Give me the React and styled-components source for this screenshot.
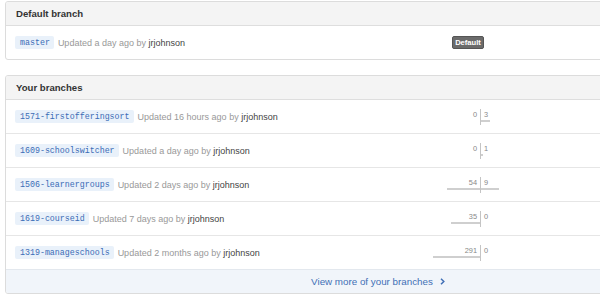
import React from 'react';
import styled, {createGlobalStyle} from "styled-components";

const GlobalStyle = createGlobalStyle`
    html, body {
        margin: 0;
        padding: 0;
        background: #fff;
        overflow: hidden;
    }
    body {
        font-family: "Liberation Sans", Arial, sans-serif;
        color: #333;
    }
`;

const Page = styled.div`
    width: 600px;
    height: 301px;
    padding: 1px 0 0 5px;
    box-sizing: border-box;
    display: flex;
    flex-direction: column;
    gap: 15px;
`;

const Box = styled.div`
    width: 744px;
    flex-shrink: 0;
    border: 1px solid #dcdcdc;
    border-radius: 3px;
    background: #fff;
    overflow: hidden;
`;

const BoxHeader = styled.div`
    height: 24px;
    box-sizing: border-box;
    padding: 0 0 1px 10px;
    background: #f4f4f4;
    border-bottom: 1px solid #dedede;
    display: flex;
    align-items: center;
    font-size: 9.6px;
    font-weight: 700;
    color: #333;
`;

const Row = styled.div`
    height: 33px;
    display: grid;
    grid-template-columns: 365px 200px 1fr;
    align-items: center;
    padding-left: 9px;
    border-top: ${props => props.first ? 'none' : '1px solid #e6e6e6'};
`;

const Summary = styled.div`
    display: flex;
    align-items: center;
    gap: 4px;
    white-space: nowrap;
`;

const BranchName = styled.span`
    display: inline-block;
    height: 13px;
    line-height: 13px;
    padding: 0 4px 0 5px;
    border-radius: 2px;
    background: #e9f1fa;
    color: #3a6cb6;
    font-family: "Liberation Mono", "DejaVu Sans Mono", monospace;
    font-size: 8.3px;
`;

const Updated = styled.span`
    font-size: 9px;
    color: #999;
`;

const Author = styled.span`
    color: #444;
`;

const DefaultCell = styled.div`
    display: flex;
    justify-content: center;
    padding-right: 24px;
`;

const DefaultLabel = styled.span`
    display: inline-block;
    height: 11px;
    line-height: 11px;
    padding: 0 2px;
    background: #6b6b6b;
    border: 1px solid #555;
    border-radius: 2px;
    color: #fff;
    font-size: 7.6px;
    font-weight: 700;
`;

const Compare = styled.div`
    display: grid;
    grid-template-columns: 1fr 1fr;
    height: 16px;
`;

const Half = styled.div`
    position: relative;
    height: 16px;
    display: flex;
    align-items: flex-start;
    justify-content: ${props => props.ahead ? 'flex-start' : 'flex-end'};
    border-left: ${props => props.ahead ? '1px solid #c4c4c4' : 'none'};
`;

const Count = styled.span`
    display: block;
    padding: 1px 3px 0;
    font-size: 7.4px;
    line-height: 9px;
    color: #888;
`;

const Bar = styled.div`
    position: absolute;
    bottom: 3px;
    height: 2px;
    width: ${props => props.size}px;
    background: #cfcfcf;
    ${props => props.ahead ? 'left: 0;' : 'right: 0;'}
`;

const Footer = styled.a`
    height: 23px;
    border-top: 1px solid #e3e8ee;
    background: #f1f5fa;
    display: flex;
    align-items: center;
    justify-content: center;
    gap: 7px;
    color: #4170b6;
    font-size: 9.8px;
    text-decoration: none;
`;

const Chevron = () => (
    <svg width="5" height="7" viewBox="0 0 5 7">
        <polyline points="1,0.8 3.8,3.5 1,6.2" fill="none" stroke="#4170b6" strokeWidth="1.5"/>
    </svg>
);

const branches = [
    {name: '1571-firstofferingsort', when: '16 hours ago', behind: 0, ahead: 3, bw: 0, aw: 9},
    {name: '1609-schoolswitcher', when: 'a day ago', behind: 0, ahead: 1, bw: 0, aw: 2},
    {name: '1506-learnergroups', when: '2 days ago', behind: 54, ahead: 9, bw: 33, aw: 18},
    {name: '1619-courseid', when: '7 days ago', behind: 35, ahead: 0, bw: 29, aw: 0},
    {name: '1319-manageschools', when: '2 months ago', behind: 291, ahead: 0, bw: 47, aw: 0},
];

const BranchSummary = ({name, when}) => (
    <Summary>
        <BranchName>{name}</BranchName>
        <Updated>Updated {when} by <Author>jrjohnson</Author></Updated>
    </Summary>
);

const App = () => {
    return (
        <>
            <GlobalStyle/>
            <Page>
                <Box>
                    <BoxHeader>Default branch</BoxHeader>
                    <Row first>
                        <BranchSummary name="master" when="a day ago"/>
                        <DefaultCell>
                            <DefaultLabel>Default</DefaultLabel>
                        </DefaultCell>
                    </Row>
                </Box>

                <Box>
                    <BoxHeader>Your branches</BoxHeader>
                    {branches.map((b, i) => (
                        <Row key={b.name} first={i === 0}>
                            <BranchSummary name={b.name} when={b.when}/>
                            <Compare>
                                <Half>
                                    <Count>{b.behind}</Count>
                                    {b.bw > 0 && <Bar size={b.bw}/>}
                                </Half>
                                <Half ahead>
                                    <Count>{b.ahead}</Count>
                                    {b.aw > 0 && <Bar ahead size={b.aw}/>}
                                </Half>
                            </Compare>
                        </Row>
                    ))}
                    <Footer href="#">
                        View more of your branches
                        <Chevron/>
                    </Footer>
                </Box>
            </Page>
        </>
    );
};

export default App;
